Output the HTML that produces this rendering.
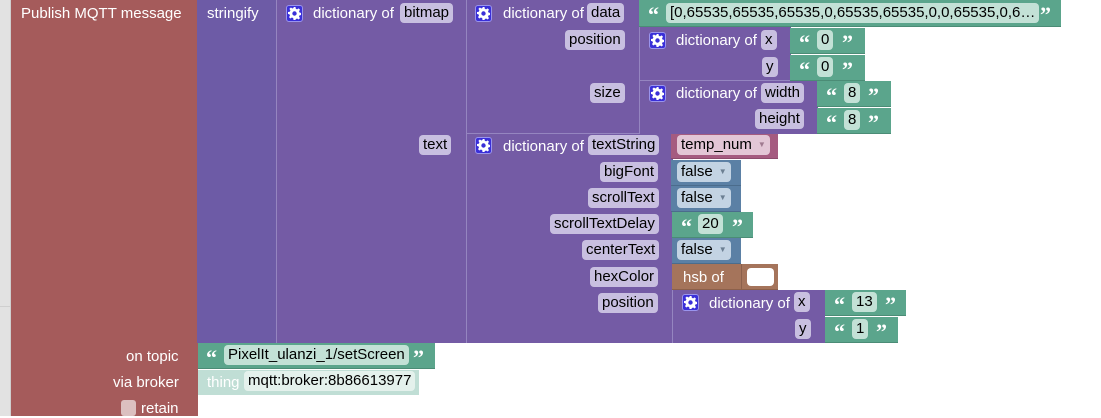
<!DOCTYPE html>
<html><head><meta charset="utf-8"><style>
*{margin:0;padding:0;box-sizing:border-box}
body{width:1101px;height:416px;overflow:hidden;background:#fff;position:relative;font-family:"Liberation Sans",Arial,sans-serif;font-size:15px}
.b{position:absolute}
.t{position:absolute;color:#fff;white-space:nowrap;line-height:18px;height:18px;margin-top:1px}
.p{position:absolute;height:20px;line-height:20px;padding:0 4px;border-radius:4px;color:#000;white-space:nowrap;font-size:15px;margin-top:-1px}
.pp{background:#c8bfe0}.pg{background:#c3e1d6}.pb{background:#c3d3e3}.pk{background:#e3c6d6}
.g{position:absolute;width:17px;height:17px;background:#3a2fd8;border:1px solid #9a94ee;border-radius:3px}
.g svg{position:absolute;left:1px;top:1px}
.q{position:absolute;color:#fff;font-weight:bold;font-size:22px;line-height:22px;font-family:"Liberation Serif",serif}
.ar{font-size:8px;color:#6c7f92;margin-left:6px;vertical-align:2px}
</style></head><body>
<svg width="0" height="0" style="position:absolute"><defs><g id="gear"><path d="M5.5 0h2l.3 1.8 1.3.6 1.5-1 1.4 1.4-1 1.5.6 1.3 1.9.4v2l-1.9.3-.6 1.3 1 1.5-1.4 1.4-1.5-1-1.3.6L7.5 13h-2l-.3-1.9-1.3-.6-1.5 1L1 10.1l1-1.5-.6-1.3L0 7V5l1.8-.3.6-1.3-1-1.5L2.9.5l1.5 1 1.3-.6z" fill="#fff"/><circle cx="6.5" cy="6.5" r="2.2" fill="#3a2fd8"/></g></defs></svg>
<div class="b" style="left:0;top:0;width:11px;height:416px;background:#e2e2e2;border-right:1px solid #cfcfcf"></div>
<div class="b" style="left:0;top:306px;width:11px;height:1px;background:#cfcfcf"></div>
<div class="b" style="left:11px;top:0;width:187px;height:416px;background:#a55b5b"></div>
<div class="t" style="left:21px;top:4px">Publish MQTT message</div>
<div class="b" style="left:197px;top:0;width:80px;height:343px;background:#6d5ba6"></div>
<div class="t" style="left:207px;top:4px">stringify</div>
<div class="b" style="left:276px;top:0;width:191px;height:343px;background:#745ba5;border-left:1px solid #9585c0"></div>
<div class="g" style="left:286px;top:5px"><svg width="13" height="13"><use href="#gear"/></svg></div>
<div class="t" style="left:313px;top:4px">dictionary of</div>
<div class="p pp" style="left:400px;top:4px">bitmap</div>
<div class="p pp" style="left:419px;top:136px">text</div>
<div class="b" style="left:466px;top:0;width:174px;height:134px;background:#745ba5;border-left:1px solid #9585c0;border-bottom:1px solid #9585c0"></div>
<div class="g" style="left:475px;top:5px"><svg width="13" height="13"><use href="#gear"/></svg></div>
<div class="t" style="left:503px;top:4px">dictionary of</div>
<div class="p pp" style="left:587px;top:4px">data</div>
<div class="p pp" style="left:565px;top:31px">position</div>
<div class="p pp" style="left:590px;top:84px">size</div>
<div class="b" style="left:639px;top:0;width:422px;height:27px;background:#5ba58c;border-bottom:1px solid #4b8c76"></div>
<div class="q" style="left:648px;top:4px">“</div>
<div class="p pg" style="left:666px;top:4px">[0,65535,65535,65535,0,65535,65535,0,0,65535,0,6…</div>
<div class="q" style="left:1040px;top:4px">”</div>
<div class="b" style="left:639px;top:27px;width:152px;height:54px;background:#745ba5;border-left:1px solid #9585c0;border-bottom:1px solid #9585c0"></div>
<div class="g" style="left:649px;top:32px"><svg width="13" height="13"><use href="#gear"/></svg></div>
<div class="t" style="left:676px;top:31px">dictionary of</div>
<div class="p pp" style="left:761px;top:31px">x</div>
<div class="p pp" style="left:762px;top:58px">y</div>
<div class="b" style="left:790px;top:28px;width:75px;height:26px;background:#5ba58c;border-bottom:1px solid #4b8c76"></div>
<div class="q" style="left:799px;top:32px">“</div><div class="p pg" style="left:817px;top:31px">0</div><div class="q" style="left:842px;top:32px">”</div>
<div class="b" style="left:790px;top:55px;width:75px;height:26px;background:#5ba58c;border-bottom:1px solid #4b8c76"></div>
<div class="q" style="left:799px;top:59px">“</div><div class="p pg" style="left:817px;top:58px">0</div><div class="q" style="left:842px;top:59px">”</div>
<div class="b" style="left:639px;top:81px;width:179px;height:53px;background:#745ba5;border-left:1px solid #9585c0"></div>
<div class="g" style="left:649px;top:85px"><svg width="13" height="13"><use href="#gear"/></svg></div>
<div class="t" style="left:676px;top:84px">dictionary of</div>
<div class="p pp" style="left:761px;top:84px">width</div>
<div class="p pp" style="left:755px;top:110px">height</div>
<div class="b" style="left:817px;top:81px;width:74px;height:26px;background:#5ba58c;border-bottom:1px solid #4b8c76"></div>
<div class="q" style="left:826px;top:85px">“</div><div class="p pg" style="left:844px;top:84px">8</div><div class="q" style="left:868px;top:85px">”</div>
<div class="b" style="left:817px;top:108px;width:74px;height:26px;background:#5ba58c;border-bottom:1px solid #4b8c76"></div>
<div class="q" style="left:826px;top:112px">“</div><div class="p pg" style="left:844px;top:111px">8</div><div class="q" style="left:868px;top:112px">”</div>
<div class="b" style="left:466px;top:134px;width:207px;height:209px;background:#745ba5;border-left:1px solid #9585c0"></div>
<div class="g" style="left:475px;top:137px"><svg width="13" height="13"><use href="#gear"/></svg></div>
<div class="t" style="left:503px;top:137px">dictionary of</div>
<div class="p pp" style="left:588px;top:136px">textString</div>
<div class="p pp" style="left:600px;top:163px">bigFont</div>
<div class="p pp" style="left:588px;top:189px">scrollText</div>
<div class="p pp" style="left:550px;top:215px">scrollTextDelay</div>
<div class="p pp" style="left:582px;top:241px">centerText</div>
<div class="p pp" style="left:590px;top:268px">hexColor</div>
<div class="p pp" style="left:598px;top:294px">position</div>
<div class="b" style="left:671px;top:134px;width:107px;height:25px;background:#a55b80;border-bottom:1px solid #8c4b6c"></div>
<div class="p pk" style="left:677px;top:136px">temp_num<span class="ar" style="color:#a07a90">▼</span></div>
<div class="b" style="left:671px;top:160px;width:70px;height:26px;background:#5b80a5;border-bottom:1px solid #4b6c8c"></div>
<div class="p pb" style="left:677px;top:163px">false<span class="ar">▼</span></div>
<div class="b" style="left:671px;top:186px;width:70px;height:26px;background:#5b80a5;border-bottom:1px solid #4b6c8c"></div>
<div class="p pb" style="left:677px;top:189px">false<span class="ar">▼</span></div>
<div class="b" style="left:672px;top:212px;width:81px;height:26px;background:#5ba58c;border-bottom:1px solid #4b8c76"></div>
<div class="q" style="left:681px;top:216px">“</div><div class="p pg" style="left:698px;top:215px">20</div><div class="q" style="left:732px;top:216px">”</div>
<div class="b" style="left:672px;top:238px;width:69px;height:26px;background:#5b80a5;border-bottom:1px solid #4b6c8c"></div>
<div class="p pb" style="left:677px;top:241px">false<span class="ar">▼</span></div>
<div class="b" style="left:672px;top:264px;width:106px;height:26px;background:#a5745b;border-bottom:1px solid #8c604b"></div>
<div class="b" style="left:741px;top:264px;width:1px;height:26px;background:#8c604b"></div>
<div class="t" style="left:683px;top:268px">hsb of</div>
<div class="b" style="left:747px;top:268px;width:27px;height:18px;background:#fff;border-radius:4px"></div>
<div class="b" style="left:672px;top:290px;width:153px;height:53px;background:#745ba5;border-left:1px solid #9585c0"></div>
<div class="g" style="left:682px;top:294px"><svg width="13" height="13"><use href="#gear"/></svg></div>
<div class="t" style="left:709px;top:294px">dictionary of</div>
<div class="p pp" style="left:794px;top:293px">x</div>
<div class="p pp" style="left:795px;top:320px">y</div>
<div class="b" style="left:825px;top:290px;width:81px;height:26px;background:#5ba58c;border-bottom:1px solid #4b8c76"></div>
<div class="q" style="left:834px;top:294px">“</div><div class="p pg" style="left:852px;top:293px">13</div><div class="q" style="left:885px;top:294px">”</div>
<div class="b" style="left:825px;top:317px;width:73px;height:26px;background:#5ba58c;border-bottom:1px solid #4b8c76"></div>
<div class="q" style="left:834px;top:321px">“</div><div class="p pg" style="left:852px;top:320px">1</div><div class="q" style="left:876px;top:321px">”</div>
<div class="t" style="left:126px;top:347px">on topic</div>
<div class="b" style="left:198px;top:343px;width:237px;height:26px;background:#5ba58c;border-bottom:1px solid #4b8c76"></div>
<div class="q" style="left:206px;top:347px">“</div><div class="p pg" style="left:224px;top:346px">PixelIt_ulanzi_1/setScreen</div><div class="q" style="left:413px;top:347px">”</div>
<div class="t" style="left:113px;top:373px">via broker</div>
<div class="b" style="left:198px;top:370px;width:221px;height:25px;background:#c0ded5"></div>
<div class="t" style="left:207px;top:373px">thing</div>
<div class="p" style="left:244px;top:372px;background:#e4f1ec">mqtt:broker:8b86613977</div>
<div class="b" style="left:121px;top:400px;width:15px;height:16px;background:#dcc0c0;border-radius:3px"></div>
<div class="t" style="left:141px;top:399px">retain</div>
</body></html>
